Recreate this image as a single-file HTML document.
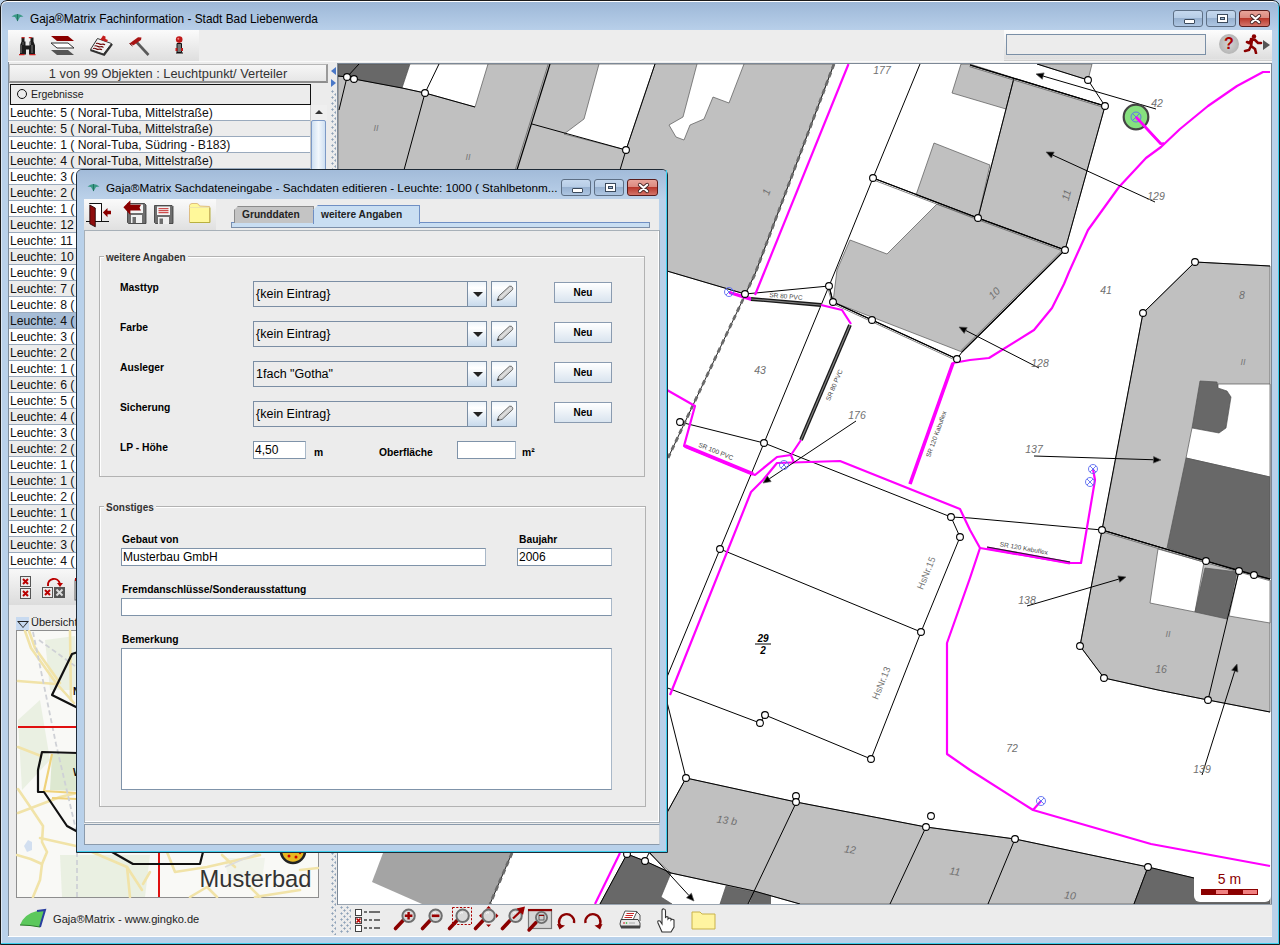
<!DOCTYPE html>
<html><head><meta charset="utf-8">
<style>
*{margin:0;padding:0;box-sizing:border-box}
html,body{width:1280px;height:945px;overflow:hidden;background:#b9d1ea;font-family:"Liberation Sans",sans-serif}
.abs{position:absolute}
#win{position:absolute;left:0;top:0;width:1280px;height:945px;border-radius:7px 7px 0 0;background:#b9d1ea;overflow:hidden}
#winb{position:absolute;left:0;top:0;width:1280px;height:945px;border:1px solid #1a1a1a;border-radius:7px 7px 0 0;pointer-events:none;box-shadow:inset -1px -1px 0 #3ccfee, inset 0 1px 0 #fff, inset 1px 0 0 rgba(255,255,255,0.5)}
#title{position:absolute;left:0;top:0;width:1280px;height:31px;background:linear-gradient(#9bb6d6,#b9d0ea)}
#title .t{position:absolute;left:30px;top:12px;font-size:11.85px;color:#000;white-space:nowrap}
.wbtn{position:absolute;top:10px;height:17px;border:1px solid #5d6f85;border-radius:3px;background:linear-gradient(#c5d8ee 0%,#b7cde6 45%,#97b1d0 50%,#aec6e2 100%)}
.wbtn.close{border-color:#5a1c1c;background:linear-gradient(#e8a49a 0%,#dc8a80 45%,#b9382c 50%,#d4756b 100%)}
#tb{position:absolute;left:8px;top:30px;width:1264px;height:32px;background:linear-gradient(#fafafa,#e3e3e3)}
.panel{background:#ececec}
.row{position:absolute;left:9px;width:301px;height:16px;font-size:12.2px;line-height:16px;padding-left:1px;color:#111;white-space:nowrap;overflow:hidden;border-bottom:1px solid #9aaabd}
.row.w{background:#fff}.row.g{background:#ececec}.row.s{background:#a7bdd6}
#dlg{position:absolute;left:76px;top:169px;width:592px;height:684px;border:1px solid #1e2a36;border-radius:6px 6px 0 0;background:#b9d1ea;overflow:hidden}
#dlgb{position:absolute;left:77px;top:170px;width:590px;height:682px;box-shadow:inset -1px -1px 0 #3ccfee;pointer-events:none}
.lbl{position:absolute;font-size:10.3px;font-weight:bold;color:#000;white-space:nowrap;margin-top:1px}
.combo{position:absolute;left:253px;width:234px;height:26px;border:1px solid #7b8ea4;background:#ececec;font-size:12.5px;line-height:24px;padding-left:2px;color:#000}
.combo .arr{position:absolute;right:0;top:0;width:19px;height:24px;border-left:1px solid #7b8ea4;background:linear-gradient(#eef4fa,#ffffff 25%,#c8daec)}
.combo .arr:after{content:"";position:absolute;left:5px;top:10px;border-left:5px solid transparent;border-right:5px solid transparent;border-top:5px solid #222}
.pen{position:absolute;left:491px;width:26px;height:26px;border:1px solid #7b8ea4;background:linear-gradient(#eef4fa,#ffffff 25%,#c8daec)}
.neu{position:absolute;left:554px;width:58px;height:21px;border:1px solid #8a9bb0;background:linear-gradient(#ffffff,#d9e4ef);font-size:10px;font-weight:bold;text-align:center;line-height:19px}
.inp{position:absolute;background:#fff;border:1px solid #7f93a9;border-right-color:#a9b8c8;font-size:12px;line-height:16px;padding-left:1px;color:#000}
.grp{position:absolute;border:1px solid #b2b2b2;box-shadow:inset 1px 1px 0 #fff}
.grp .gt{position:absolute;top:-5px;left:4px;background:#ececec;padding:0 2px;font-size:10px;font-weight:bold;color:#333}
</style></head><body>
<div id="win">
 <div id="title">
  <svg class="abs" style="left:11px;top:13px" width="13" height="9" viewBox="0 0 13 9"><path d="M0.5 3.5 Q6.5 -1.5 12.5 3.5 L9 4 L6.5 8.5 L4 4z" fill="#3a9a86"/><path d="M6.5 1 L6.5 8" stroke="#1f6a5a" stroke-width="0.8"/></svg>
  <div class="t">Gaja®Matrix Fachinformation - Stadt Bad Liebenwerda</div>
  <div class="wbtn" style="left:1173px;width:30px"><div class="abs" style="left:10px;top:8px;width:11px;height:5px;background:#fff;border:1px solid #3b4a5c;border-radius:1px"></div></div>
  <div class="wbtn" style="left:1206px;width:30px"><div class="abs" style="left:10px;top:3px;width:11px;height:9px;background:#fff;border:1px solid #3b4a5c"><div class="abs" style="left:2px;top:2px;width:5px;height:3px;border:1px solid #3b4a5c;background:#9fb7d3"></div></div></div>
  <div class="wbtn close" style="left:1239px;width:31px"><svg class="abs" style="left:9px;top:2px" width="13" height="12" viewBox="0 0 13 12"><path d="M2.8 2.8L10.2 9.2M10.2 2.8L2.8 9.2" stroke="#4a2a2a" stroke-width="3.9" stroke-linecap="round"/><path d="M2.8 2.8L10.2 9.2M10.2 2.8L2.8 9.2" stroke="#fff" stroke-width="2.1" stroke-linecap="round"/></svg></div>
 </div>
 <div id="tb"></div>
<div class="abs" style="left:8px;top:61px;width:1264px;height:2px;background:#ececec;border-top:1px solid #fafafa"></div>
<div class="abs" style="left:8px;top:30px;width:191px;height:31px;background:linear-gradient(#fbfbfb,#dedede)"></div>
<svg class="abs" style="left:18px;top:36px" width="19" height="20" viewBox="18 36 19 20">
<path d="M21.5 37.5h3v4h1v4h4v-4h1v-4h3v4l1.5 4v9h-6v-5h-3v5h-6v-9l1.5-4z" fill="#1c1c1c"/>
<path d="M21.7 37h2.8v1.3h-2.8zM28.8 37h3v1.3h-3z" fill="#c22"/>
<path d="M19 54h5.5v1.3h-5.5zM29.5 54h6v1.3h-6z" fill="#c22"/>
<path d="M21 45v8M32 45v8" stroke="#8a8a8a" stroke-width="0.9"/><path d="M23 42v3M30.5 42v3" stroke="#777" stroke-width="0.8"/></svg><svg class="abs" style="left:50px;top:35px" width="25" height="22" viewBox="0 0 25 22">
<path d="M1 1h17l6 5h-17z" fill="#8b0000"/>
<path d="M1 8h17l6 5h-17z" fill="#fff" stroke="#333" stroke-width="1"/>
<path d="M1 15h17l6 5h-17z" fill="#555"/></svg><svg class="abs" style="left:89px;top:34px" width="26" height="24" viewBox="89 34 26 24">
<path d="M97 39 L113 44.5 L104.5 56 L90 51z" fill="#333"/>
<path d="M97.5 38.5 L111.5 43.5 L103.5 54 L90.5 49.5z" fill="#f2f2f2" stroke="#222" stroke-width="0.9"/>
<path d="M96 43.5q2 -0.5 3 0.3t3 0.4 3 0.8M94.5 46q2 -0.5 3 0.3t3 0.4 3 0.8M93 48.5q2 -0.5 3 0.3t3 0.4 3 0.8" stroke="#6b0000" stroke-width="1.1" fill="none"/>
<path d="M101.5 38 L103 35.5 L105.5 36.5 L105.5 39 L108 40 L106.5 42 L100 39.5z" fill="#c41e1e"/></svg><svg class="abs" style="left:128px;top:35px" width="24" height="22" viewBox="128 35 24 22">
<path d="M136.5 42 L148.5 55" stroke="#5a5a5a" stroke-width="2.6"/>
<path d="M129.5 43.5 L138 37.3 L141.5 37.5 L141 40 L133.5 45.3z" fill="#a81414"/><path d="M129.5 43.5 L132.5 46" stroke="#6a0000" stroke-width="1"/></svg><svg class="abs" style="left:172px;top:35px" width="16" height="20" viewBox="172 35 16 20">
<circle cx="179.2" cy="39.6" r="3.3" fill="#c01818"/><circle cx="178.3" cy="38.7" r="1" fill="#f08080"/>
<path d="M177 43.5h4.5v9h-4.5z" fill="#777" stroke="#111" stroke-width="1"/>
<path d="M175.5 48h2v3h-2zM181 48h2v3h-2z" fill="#c01818"/><path d="M176 53h7" stroke="#111" stroke-width="1.2"/></svg>
<div class="abs" style="left:199px;top:30px;width:805px;height:31px;background:#ededed"></div>
<div class="abs" style="left:1004px;top:30px;width:268px;height:29px;background:linear-gradient(#fdfdfd,#dedede)"></div><div class="abs" style="left:1004px;top:59.5px;width:268px;height:1px;background:#cfcfcf"></div>
<div class="abs" style="left:1006px;top:34px;width:200px;height:21px;background:#ececec;border:1px solid #7a8fa6"></div>
<div class="abs" style="left:1219px;top:34px;width:20px;height:20px;border-radius:50%;background:radial-gradient(#d4d4d4,#a9a9a9)"></div>
<div class="abs" style="left:1219px;top:33px;width:20px;height:22px;text-align:center;font-size:16px;font-weight:bold;color:#a00;line-height:22px">?</div>
<svg class="abs" style="left:1243px;top:34px" width="28" height="20" viewBox="0 0 28 20">
<circle cx="11" cy="2.5" r="2.2" fill="#8b0000"/>
<path d="M8 5l4 1 3 3 3 0M9 5l-3 4-2-1M9 6l-1 6 4 3 1 4M8 12l-2 4-4 1" stroke="#8b0000" stroke-width="2.6" fill="none" stroke-linecap="round"/>
<path d="M20 6l7 5-7 5z" fill="#555"/></svg>

 <!-- LEFT PANEL -->
 <div id="left" class="abs panel" style="left:8px;top:62px;width:322px;height:875px;border-left:1px solid #7f8c9a;border-bottom:1px solid #fff"></div>
<div class="abs" style="left:9px;top:64px;width:319px;height:19px;background:linear-gradient(#f6f6f6,#e6e6e6);border:1px solid #b5b5b5;border-bottom:2px solid #8e8e8e;border-right:2px solid #9a9a9a;font-size:12.8px;text-align:center;line-height:17px;color:#333">1 von 99 Objekten : Leuchtpunkt/ Verteiler</div>
<div class="abs" style="left:10px;top:84px;width:301px;height:21px;border:1.5px solid #111;background:#ececec;font-size:10.5px;line-height:18px;color:#222;padding-left:20px">Ergebnisse</div>
<div class="abs" style="left:16.8px;top:88.8px;width:10.5px;height:10.5px;border:1px solid #111;border-radius:50%"></div>
<div class="abs" style="left:9px;top:105px;width:301px;height:464px;background:#fff;border-left:1px solid #555"></div>
<div class="row w" style="top:105px">Leuchte: 5 ( Noral-Tuba, Mittelstraße)</div><div class="row g" style="top:121px">Leuchte: 5 ( Noral-Tuba, Mittelstraße)</div><div class="row w" style="top:137px">Leuchte: 1 ( Noral-Tuba, Südring - B183)</div><div class="row g" style="top:153px">Leuchte: 4 ( Noral-Tuba, Mittelstraße)</div><div class="row w" style="top:169px">Leuchte: 3 ( Noral-Tuba, Mittelstraße)</div><div class="row g" style="top:185px">Leuchte: 2 ( Noral-Tuba, Mittelstraße)</div><div class="row w" style="top:201px">Leuchte: 1 ( Noral-Tuba, Mittelstraße)</div><div class="row g" style="top:217px">Leuchte: 12 ( Noral-Tuba)</div><div class="row w" style="top:233px">Leuchte: 11 ( Noral-Tuba)</div><div class="row g" style="top:249px">Leuchte: 10 ( Noral-Tuba)</div><div class="row w" style="top:265px">Leuchte: 9 ( Noral-Tuba)</div><div class="row g" style="top:281px">Leuchte: 7 ( Noral-Tuba)</div><div class="row w" style="top:297px">Leuchte: 8 ( Noral-Tuba)</div><div class="row s" style="top:313px">Leuchte: 4 ( Noral-Tuba)</div><div class="row w" style="top:329px">Leuchte: 3 ( Noral-Tuba)</div><div class="row g" style="top:345px">Leuchte: 2 ( Noral-Tuba)</div><div class="row w" style="top:361px">Leuchte: 1 ( Noral-Tuba)</div><div class="row g" style="top:377px">Leuchte: 6 ( Noral-Tuba)</div><div class="row w" style="top:393px">Leuchte: 5 ( Noral-Tuba)</div><div class="row g" style="top:409px">Leuchte: 4 ( Noral-Tuba)</div><div class="row w" style="top:425px">Leuchte: 3 ( Noral-Tuba)</div><div class="row g" style="top:441px">Leuchte: 2 ( Noral-Tuba)</div><div class="row w" style="top:457px">Leuchte: 1 ( Noral-Tuba)</div><div class="row g" style="top:473px">Leuchte: 1 ( Noral-Tuba)</div><div class="row w" style="top:489px">Leuchte: 2 ( Noral-Tuba)</div><div class="row g" style="top:505px">Leuchte: 1 ( Noral-Tuba)</div><div class="row w" style="top:521px">Leuchte: 2 ( Noral-Tuba)</div><div class="row g" style="top:537px">Leuchte: 3 ( Noral-Tuba)</div><div class="row w" style="top:553px">Leuchte: 4 ( Noral-Tuba)</div>
<div class="abs" style="left:310px;top:105px;width:17px;height:464px;background:#ececec;border-left:1px solid #c8c8c8"></div>
<div class="abs" style="left:311px;top:105px;width:16px;height:15px;background:#efefef"><div class="abs" style="left:4px;top:5px;border-left:4px solid transparent;border-right:4px solid transparent;border-bottom:4px solid #333"></div></div>
<div class="abs" style="left:311px;top:120px;width:15px;height:120px;border:1px solid #7d9ac6;border-radius:2px;background:linear-gradient(90deg,#cfe0f2,#f2f7fc 50%,#cfe0f2)"></div>
<div class="abs" style="left:9px;top:569px;width:319px;height:36px;background:linear-gradient(#f8f8f8,#dcdcdc)"></div>
<svg class="abs" style="left:18px;top:575px" width="70" height="26" viewBox="0 0 70 26">
<rect x="2.5" y="1.5" width="10" height="10" fill="#ececec" stroke="#555"/><path d="M5 4l5 5M10 4l-5 5" stroke="#b00" stroke-width="2"/>
<rect x="2.5" y="13.5" width="10" height="10" fill="#ececec" stroke="#555"/><path d="M5 16l5 5M10 16l-5 5" stroke="#b00" stroke-width="2"/>
<rect x="24.5" y="12.5" width="10" height="10" fill="#ececec" stroke="#555"/><path d="M27 15l5 5M32 15l-5 5" stroke="#b00" stroke-width="2"/>
<rect x="36" y="12" width="11" height="11" fill="#555"/><path d="M38.5 14.5l6 6M44.5 14.5l-6 6" stroke="#ddd" stroke-width="2"/>
<path d="M30 11 C29 3 40 1 42 9" stroke="#b00" stroke-width="2" fill="none"/><path d="M39 8l3 4 3-4z" fill="#b00"/>
<rect x="57" y="5" width="4" height="20" fill="#ddd" stroke="#666"/><rect x="57" y="3" width="4" height="3" fill="#b00"/></svg>
<div class="abs" style="left:16px;top:617px;width:13px;height:13px;background:#c8daf0"></div>
<div class="abs" style="left:17px;top:621px;border-left:6px solid transparent;border-right:6px solid transparent;border-top:7px solid #222"></div>
<div class="abs" style="left:19px;top:622px;border-left:4px solid transparent;border-right:4px solid transparent;border-top:5px solid #c8daf0"></div>
<div class="abs" style="left:31px;top:616px;font-size:11px;color:#222;white-space:nowrap">Übersichtskarte</div>
<svg class="abs" style="left:16px;top:630px" width="303" height="268" viewBox="16 630 303 268">
<rect x="16" y="630" width="303" height="268" fill="#8e8e8e"/>
<rect x="17" y="631" width="301" height="266" fill="#f9f9f6"/>
<g fill="#eaf0e2">
<path d="M45 640 L75 636 L78 690 L50 690z"/><path d="M18 720 L40 700 L50 760 L22 790z"/><path d="M52 754 L77 754 L77 791 L50 790z" fill="#dde8d0"/>
<path d="M60 855 L150 855 L145 897 L62 897z"/><path d="M225 858 L265 858 L262 880 L228 880z" fill="#f0f3ea"/>
</g>
<path d="M24 846 l4 -6 4 2 0 8 -5 2z" fill="#d2dff0"/>
<g fill="none" stroke="#f1e3a8" stroke-width="2.6" stroke-linecap="round" stroke-linejoin="round">
<path d="M25 631 L31 648 L56 683 L74 703"/><path d="M29 631 L35 648 L60 683"/>
<path d="M18 681 L56 684"/>
<path d="M70 631 L71 700"/>
<path d="M18 747 L41 756"/>
<path d="M18 813 L60 797 L77 793"/>
<path d="M18 789 L31 808 L43 826 L42 842 L47 852 L42 864 L40 880 L33 897"/>
<path d="M40 838 L76 846"/>
<path d="M17 855 Q30 858 42 864"/>
<path d="M92 852 L127 867 L142 890"/><path d="M127 867 L130 897"/>
<path d="M150 872 L143 884"/>
<path d="M167 852 L175 872 L207 867 L260 855"/>
<path d="M190 897 L207 887 L217 897"/>
<path d="M222 855 L235 867"/>
<path d="M250 887 L260 897"/>
<path d="M255 897 L300 890"/><path d="M300 870 L318 868"/>
</g>
<g fill="none" stroke="#efd27a" stroke-width="2.2">
<path d="M52 754 L44 791 L77 793"/><path d="M52 798 L77 799"/>
</g>
<g fill="none" stroke="#cfd1d6" stroke-width="1.8" stroke-dasharray="5 3">
<path d="M33 632 L56 744 L76 830"/><path d="M39 640 L75 666"/><path d="M77 852 L77 897"/>
</g>
<path d="M225 867 L260 852" stroke="#dcdcdc" stroke-width="1.5"/>
<path d="M18 727 L78 727" stroke="#e01010" stroke-width="2.2"/>
<path d="M159 852 L159 897" stroke="#e01010" stroke-width="2"/>
<g fill="none" stroke="#111" stroke-width="2.2" stroke-linejoin="round">
<path d="M78 652 L72 654 L52 695 L78 708"/>
<path d="M78 753 L42 752 L38 770 L38 792 L44 792 L67 826 L78 832"/>
<path d="M112 852 L133 864 L200 864 L203 852"/>
</g>
<text x="73" y="691" font-size="10" font-weight="bold" fill="#111" dominant-baseline="central">N</text>
<text x="73" y="772" font-size="10" font-weight="bold" fill="#111" dominant-baseline="central">W</text>
<circle cx="293" cy="851" r="12" fill="#e8b820" stroke="#222" stroke-width="2.5"/>
<circle cx="289" cy="856" r="1.5" fill="#c00"/><circle cx="296" cy="857" r="1.5" fill="#c00"/><circle cx="300" cy="853" r="1.2" fill="#c00"/>
<text x="255.5" y="878.5" font-size="23.7" fill="#333" text-anchor="middle" dominant-baseline="central">Musterbad</text>
</svg>
<svg class="abs" style="left:18px;top:908px" width="30" height="22" viewBox="0 0 30 22">
<path d="M2 17 Q6 6 19 3 L27 2 Q24 12 22 19 Q12 17 2 17z" fill="#5cc85c"/><path d="M19 3 L27 2 Q24 12 22 19" stroke="#2a3fa0" stroke-width="2" fill="none"/><path d="M2 17 Q12 17 22 19" stroke="#2a7a2a" stroke-width="1" fill="none"/></svg>
<div class="abs" style="left:53px;top:913px;font-size:11.1px;color:#222;white-space:nowrap">Gaja®Matrix - www.gingko.de</div>

 <div class="abs panel" style="left:330px;top:62px;width:8px;height:874px"></div>
 <div class="abs" style="left:330.5px;top:90px;width:6px;height:845px;clip-path:inset(0 0.5px 0 0);background-image:radial-gradient(circle at 1.5px 1.5px,#8ea2b8 0.9px,transparent 1.2px),radial-gradient(circle at 4.5px 4.5px,#8ea2b8 0.9px,transparent 1.2px);background-size:6px 6px"></div>
<div class="abs" style="left:8px;top:936px;width:1264px;height:1px;background:#fff"></div>
<div class="abs" style="left:331px;top:67px;border-top:4px solid transparent;border-bottom:4px solid transparent;border-right:5px solid #4a78c8"></div>
<div class="abs" style="left:331px;top:79px;border-top:4px solid transparent;border-bottom:4px solid transparent;border-left:5px solid #4a78c8"></div>

 <!-- MAP -->
 <div id="mapwrap" class="abs" style="left:337px;top:63px;width:935px;height:842px;background:#fff;border:1px solid #7c8896"></div>
<svg class="abs" style="left:338px;top:64px" width="933" height="840" viewBox="338 64 933 840" shape-rendering="geometricPrecision">
<rect x="338" y="64" width="933" height="840" fill="#fff"/>
<polygon points="338,64 834,64 755,274 745,294 667,271 338,175" fill="#c0c0c0" stroke="#555" stroke-width="0.7"/>
<polygon points="338,64 410,64 402,88 354,79 347,77 338,76" fill="#686868" stroke="#555" stroke-width="0.7"/>
<polygon points="410,64 488,64 475,107 425,93 402,88" fill="#fff" stroke="#555" stroke-width="0.7"/>
<polygon points="599,64 655,64 626,150 564,134 584,119" fill="#fff" stroke="#555" stroke-width="0.7"/>
<polygon points="697,64 744,64 729,103 713,97 704,119 690,125 684,140 676,137 669,125 683,117" fill="#fff" stroke="#555" stroke-width="0.7"/>
<polygon points="961,64 970,64 1014,78 1006,109 952,93" fill="#c0c0c0" stroke="#555" stroke-width="0.7"/>
<polygon points="1037,64 1092,64 1088,80" fill="#c0c0c0" stroke="#555" stroke-width="0.7"/>
<polygon points="1014,78 1105,106 1065,250 978,218" fill="#c0c0c0" stroke="#555" stroke-width="0.7"/>
<polygon points="934,143 990,165 978,218 916,195" fill="#c0c0c0" stroke="#555" stroke-width="0.7"/>
<polygon points="850,240 887,254 937,204 1065,250 962,352 833,302 837,270" fill="#c0c0c0" stroke="#555" stroke-width="0.7"/>
<polygon points="1195,262 1270,266 1270,579 1254,575 1239,571 1206,561 1102,530 1111,484 1143,313" fill="#c0c0c0" stroke="#555" stroke-width="0.7"/>
<polygon points="1200,381 1217,382 1218,388 1227,391 1231,397 1226,428 1219,433 1192,428" fill="#686868" stroke="#555" stroke-width="0.7"/>
<polygon points="1218,384 1270,384 1270,477 1186,458 1192,428 1219,433 1226,428 1231,397 1227,391 1218,388" fill="#fff" stroke="#555" stroke-width="0.7"/>
<polygon points="1186,458 1270,477 1270,579 1254,575 1239,571 1206,561 1167,548" fill="#686868" stroke="#555" stroke-width="0.7"/>
<polygon points="1102,530 1206,561 1239,571 1270,580 1270,712 1208,700 1158,690 1104,678 1080,646" fill="#c0c0c0" stroke="#555" stroke-width="0.7"/>
<polygon points="1158,549 1204,562 1195,612 1150,603" fill="#fff" stroke="#555" stroke-width="0.7"/>
<polygon points="1205,568 1237,572 1227,619 1195,612" fill="#686868" stroke="#555" stroke-width="0.7"/>
<polygon points="1239,571 1270,580 1270,623 1229,616" fill="#fff" stroke="#555" stroke-width="0.7"/>
<polygon points="686,778 796,802 926,827 1015,839 1148,867 1134,904 800,904 754,891 671,873 649,853 665,816" fill="#c0c0c0" stroke="#555" stroke-width="0.7"/>
<polygon points="754,891 771,895.5 771,904 749,904" fill="#686868" stroke="none" stroke-width="0.7"/>
<polygon points="1148,867 1194,878 1270,896 1270,904 1134,904" fill="#686868" stroke="#555" stroke-width="0.7"/>
<polygon points="627,854 645,861 671,873 661,897 672,904 600,904" fill="#686868" stroke="#555" stroke-width="0.7"/>
<polygon points="726,886 754,892 748,904 720,904" fill="#686868" stroke="#555" stroke-width="0.7"/>
<polygon points="383,853 512,853 490,904 422,904 372,882" fill="#a4a4a4" stroke="none" stroke-width="0.7"/>
<polyline points="920,64 873,178 834,274 829,286 764,443 747,484 720,549 667,677" fill="none" stroke="#000" stroke-width="1.0" />
<polyline points="873,178 978,218 1065,250" fill="none" stroke="#000" stroke-width="1.0" />
<polyline points="970,65 1105,106" fill="none" stroke="#000" stroke-width="1.0" />
<polyline points="1037,64 1088,80 1105,106" fill="none" stroke="#000" stroke-width="1.0" />
<polyline points="1105,106 1065,250 962,352" fill="none" stroke="#000" stroke-width="1.0" />
<polyline points="1014,78 978,218" fill="none" stroke="#000" stroke-width="1.0" />
<polyline points="667,271 745,294 829,286" fill="none" stroke="#000" stroke-width="1.0" />
<polyline points="829,286 833,302 872,320 957,359 962,352" fill="none" stroke="#000" stroke-width="1.0" />
<polyline points="680,422 764,443 951,517 970,518 1102,530" fill="none" stroke="#000" stroke-width="1.0" />
<polyline points="951,517 960,537 921,632 871,759" fill="none" stroke="#000" stroke-width="1.0" />
<polyline points="720,549 921,632" fill="none" stroke="#000" stroke-width="1.0" />
<polyline points="665,687 760,723 765,715 871,759" fill="none" stroke="#000" stroke-width="1.0" />
<polyline points="667,702 686,778 645,853" fill="none" stroke="#000" stroke-width="1.0" />
<polyline points="686,778 796,802 926,827 1015,839 1148,867 1194,878" fill="none" stroke="#000" stroke-width="1.0" />
<polyline points="796,803 748,904" fill="none" stroke="#000" stroke-width="1.0" />
<polyline points="926,827 890,904" fill="none" stroke="#000" stroke-width="1.0" />
<polyline points="1015,839 988,904" fill="none" stroke="#000" stroke-width="1.0" />
<polyline points="1148,867 1134,904" fill="none" stroke="#000" stroke-width="1.0" />
<polyline points="1102,530 1080,646 1104,678 1158,690 1208,700 1270,712" fill="none" stroke="#000" stroke-width="1.0" />
<polyline points="1239,571 1208,700" fill="none" stroke="#000" stroke-width="1.0" />
<polyline points="1143,313 1195,262 1270,266" fill="none" stroke="#000" stroke-width="1.0" />
<polyline points="1143,313 1102,530" fill="none" stroke="#000" stroke-width="1.0" />
<polyline points="1102,530 1206,561 1239,571 1254,575 1270,579" fill="none" stroke="#000" stroke-width="1.0" />
<polyline points="671,873 754,891 800,904" fill="none" stroke="#000" stroke-width="1.0" />
<polyline points="649,853 645,861" fill="none" stroke="#000" stroke-width="1.0" />
<polyline points="627,854 600,904" fill="none" stroke="#000" stroke-width="1.0" />
<polyline points="627,854 645,861 671,873" fill="none" stroke="#000" stroke-width="1.0" />
<polyline points="338,76 347,77 354,79 402,88 425,93 475,107" fill="none" stroke="#000" stroke-width="1.0" />
<polyline points="439,64 425,93 404,170" fill="none" stroke="#000" stroke-width="1.0" />
<polyline points="359,64 347,77 339,110" fill="none" stroke="#000" stroke-width="1.0" />
<polyline points="532,124 626,150 655,64" fill="none" stroke="#000" stroke-width="1.0" />
<polyline points="626,150 620,170" fill="none" stroke="#000" stroke-width="1.0" />
<polyline points="873,178 978,218 1065,250" fill="none" stroke="#000" stroke-width="1.2" />
<polyline points="872.39,179.59 977.41,219.6 1064.41,251.6" fill="none" stroke="#666" stroke-width="0.8" />
<polyline points="970,65 1105,106" fill="none" stroke="#000" stroke-width="1.2" />
<polyline points="969.51,66.63 1104.51,107.63" fill="none" stroke="#666" stroke-width="0.8" />
<polyline points="1065,250 962,352" fill="none" stroke="#000" stroke-width="1.2" />
<polyline points="1063.8,248.79 960.8,350.79" fill="none" stroke="#666" stroke-width="0.8" />
<polyline points="1102,530 1206,561 1270,579" fill="none" stroke="#000" stroke-width="1.2" />
<polyline points="1101.51,531.63 1205.54,562.64 1269.54,580.64" fill="none" stroke="#666" stroke-width="0.8" />
<polyline points="829,286 833,302 957,359" fill="none" stroke="#000" stroke-width="1.2" />
<polyline points="827.35,286.41 832.29,303.54 956.29,360.54" fill="none" stroke="#666" stroke-width="0.8" />
<polyline points="550,64 517,170" fill="none" stroke="#000" stroke-width="1.2" />
<polyline points="548.38,63.49 515.38,169.49" fill="none" stroke="#666" stroke-width="0.8" />
<polyline points="834,64 755,274 668,458" fill="none" stroke="#222" stroke-width="1" />
<polyline points="834,64 755,274 668,458" fill="none" stroke="#6a6a6a" stroke-width="2.8" stroke-dasharray="5 4"/>
<polyline points="512,853 490,904" fill="none" stroke="#222" stroke-width="1" />
<polyline points="512,853 490,904" fill="none" stroke="#6a6a6a" stroke-width="2.8" stroke-dasharray="5 4"/>
<polyline points="848.5,64 755,295" fill="none" stroke="#ff00ff" stroke-width="2.2" stroke-linejoin="round"/>
<polyline points="729,292 751,299" fill="none" stroke="#ff00ff" stroke-width="2.2" stroke-linejoin="round"/>
<polyline points="821,305 842,310 851,324" fill="none" stroke="#ff00ff" stroke-width="2.2" stroke-linejoin="round"/>
<polyline points="801,440 791,455 794,463" fill="none" stroke="#ff00ff" stroke-width="2.2" stroke-linejoin="round"/>
<polyline points="667,390 695,406 684,446 755,475 777,457 791,455" fill="none" stroke="#ff00ff" stroke-width="2.2" stroke-linejoin="round"/>
<polyline points="620,853 595,904" fill="none" stroke="#ff00ff" stroke-width="2.2" stroke-linejoin="round"/>
<polyline points="670,695 751,492 763,480 777,463 840,461 960,509 970,530 980,548 970,578 947,643 947,754 970,770 1033,810 1151,844 1270,866" fill="none" stroke="#ff00ff" stroke-width="2.2" stroke-linejoin="round"/>
<polyline points="910,484 953,363 970,360 989,358 1034,330 1052,308 1064,284 1069,272 1088,230 1119,187 1146,158 1161,147 1180,129 1208,106 1237,86 1263,72 1270,72" fill="none" stroke="#ff00ff" stroke-width="2.2" stroke-linejoin="round"/>
<polyline points="980,548 1070,563 1081,563 1095,480 1093,469" fill="none" stroke="#ff00ff" stroke-width="2.2" stroke-linejoin="round"/>
<polyline points="1136,117 1161,144 1164,143" fill="none" stroke="#ff00ff" stroke-width="2.2" stroke-linejoin="round"/>
<polyline points="1033,810 1041,801" fill="none" stroke="#ff00ff" stroke-width="2.2" stroke-linejoin="round"/>
<polyline points="910,484 953,363" fill="none" stroke="#ff00ff" stroke-width="3.6" />
<polyline points="685,446 753,474" fill="none" stroke="#ff00ff" stroke-width="3.6" />
<polyline points="987,548 1070,563" fill="none" stroke="#ff00ff" stroke-width="3.2" />
<polyline points="987,547 1070,562" fill="none" stroke="#222" stroke-width="1.2" />
<polyline points="751,299 821,305" fill="none" stroke="#1a1a1a" stroke-width="3.8" />
<polyline points="751,299 821,305" fill="none" stroke="#808080" stroke-width="1.2" />
<polyline points="850,325 801,440" fill="none" stroke="#1a1a1a" stroke-width="3.8" />
<polyline points="850,325 801,440" fill="none" stroke="#808080" stroke-width="1.2" />
<polygon points="729,291 751,297 751,301 729,294" fill="#ff00ff" stroke="none" stroke-width="0.7"/>
<polyline points="1156,109 1043.2,76.1" fill="none" stroke="#000" stroke-width="1" /><polygon points="1036,74 1044.1,72.9 1042.3,79.3" fill="#000" stroke="#555" stroke-width="0.7"/>
<polyline points="1155,202 1052.8169988100763,155.12706367434689" fill="none" stroke="#000" stroke-width="1" /><polygon points="1046,152 1054.2,152.1 1051.4,158.1" fill="#000" stroke="#555" stroke-width="0.7"/>
<polyline points="1039,368 965.6744993791766,330.420680931828" fill="none" stroke="#000" stroke-width="1" /><polygon points="959,327 967.2,327.5 964.2,333.4" fill="#000" stroke="#555" stroke-width="0.7"/>
<polyline points="856,421 769.2403772075338,478.8397485283108" fill="none" stroke="#000" stroke-width="1" /><polygon points="763,483 767.4,476.1 771.1,481.6" fill="#000" stroke="#555" stroke-width="0.7"/>
<polyline points="1034,456 1153.503717242035,459.7638966060483" fill="none" stroke="#000" stroke-width="1" /><polygon points="1161,460 1153.4,463.1 1153.6,456.5" fill="#000" stroke="#555" stroke-width="0.7"/>
<polyline points="1027,606 1118.8024476769033,579.1083739128263" fill="none" stroke="#000" stroke-width="1" /><polygon points="1126,577 1119.7,582.3 1117.9,575.9" fill="#000" stroke="#555" stroke-width="0.7"/>
<polyline points="1202,775 1234.7445989820742,671.1528432282792" fill="none" stroke="#000" stroke-width="1" /><polygon points="1237,664 1237.9,672.1 1231.6,670.2" fill="#000" stroke="#555" stroke-width="0.7"/>
<polyline points="650,853 688.93206528612,895.4713439484945" fill="none" stroke="#000" stroke-width="1" /><polygon points="694,901 686.5,897.7 691.4,893.2" fill="#000" stroke="#555" stroke-width="0.7"/>
<circle cx="347" cy="77" r="3.4" fill="#fff" stroke="#000" stroke-width="1.1"/>
<circle cx="354" cy="79" r="3.4" fill="#fff" stroke="#000" stroke-width="1.1"/>
<circle cx="425" cy="93" r="3.4" fill="#fff" stroke="#000" stroke-width="1.1"/>
<circle cx="626" cy="150" r="3.4" fill="#fff" stroke="#000" stroke-width="1.1"/>
<circle cx="873" cy="178" r="3.4" fill="#fff" stroke="#000" stroke-width="1.1"/>
<circle cx="978" cy="218" r="3.4" fill="#fff" stroke="#000" stroke-width="1.1"/>
<circle cx="1065" cy="250" r="3.4" fill="#fff" stroke="#000" stroke-width="1.1"/>
<circle cx="1088" cy="80" r="3.4" fill="#fff" stroke="#000" stroke-width="1.1"/>
<circle cx="1105" cy="106" r="3.4" fill="#fff" stroke="#000" stroke-width="1.1"/>
<circle cx="829" cy="286" r="3.4" fill="#fff" stroke="#000" stroke-width="1.1"/>
<circle cx="833" cy="302" r="3.4" fill="#fff" stroke="#000" stroke-width="1.1"/>
<circle cx="872" cy="320" r="3.4" fill="#fff" stroke="#000" stroke-width="1.1"/>
<circle cx="957" cy="359" r="3.4" fill="#fff" stroke="#000" stroke-width="1.1"/>
<circle cx="745" cy="294" r="3.4" fill="#fff" stroke="#000" stroke-width="1.1"/>
<circle cx="680" cy="422" r="3.4" fill="#fff" stroke="#000" stroke-width="1.1"/>
<circle cx="764" cy="443" r="3.4" fill="#fff" stroke="#000" stroke-width="1.1"/>
<circle cx="720" cy="549" r="3.4" fill="#fff" stroke="#000" stroke-width="1.1"/>
<circle cx="951" cy="517" r="3.4" fill="#fff" stroke="#000" stroke-width="1.1"/>
<circle cx="960" cy="537" r="3.4" fill="#fff" stroke="#000" stroke-width="1.1"/>
<circle cx="921" cy="632" r="3.4" fill="#fff" stroke="#000" stroke-width="1.1"/>
<circle cx="1102" cy="530" r="3.4" fill="#fff" stroke="#000" stroke-width="1.1"/>
<circle cx="1206" cy="561" r="3.4" fill="#fff" stroke="#000" stroke-width="1.1"/>
<circle cx="1239" cy="571" r="3.4" fill="#fff" stroke="#000" stroke-width="1.1"/>
<circle cx="1254" cy="575" r="3.4" fill="#fff" stroke="#000" stroke-width="1.1"/>
<circle cx="1080" cy="646" r="3.4" fill="#fff" stroke="#000" stroke-width="1.1"/>
<circle cx="1104" cy="678" r="3.4" fill="#fff" stroke="#000" stroke-width="1.1"/>
<circle cx="1143" cy="313" r="3.4" fill="#fff" stroke="#000" stroke-width="1.1"/>
<circle cx="1195" cy="262" r="3.4" fill="#fff" stroke="#000" stroke-width="1.1"/>
<circle cx="760" cy="723" r="3.4" fill="#fff" stroke="#000" stroke-width="1.1"/>
<circle cx="765" cy="715" r="3.4" fill="#fff" stroke="#000" stroke-width="1.1"/>
<circle cx="871" cy="759" r="3.4" fill="#fff" stroke="#000" stroke-width="1.1"/>
<circle cx="686" cy="778" r="3.4" fill="#fff" stroke="#000" stroke-width="1.1"/>
<circle cx="796" cy="796" r="3.4" fill="#fff" stroke="#000" stroke-width="1.1"/>
<circle cx="796" cy="802" r="3.4" fill="#fff" stroke="#000" stroke-width="1.1"/>
<circle cx="926" cy="827" r="3.4" fill="#fff" stroke="#000" stroke-width="1.1"/>
<circle cx="931" cy="816" r="3.4" fill="#fff" stroke="#000" stroke-width="1.1"/>
<circle cx="1015" cy="839" r="3.4" fill="#fff" stroke="#000" stroke-width="1.1"/>
<circle cx="1148" cy="867" r="3.4" fill="#fff" stroke="#000" stroke-width="1.1"/>
<circle cx="1208" cy="700" r="3.4" fill="#fff" stroke="#000" stroke-width="1.1"/>
<circle cx="627" cy="854" r="3.4" fill="#fff" stroke="#000" stroke-width="1.1"/>
<circle cx="645" cy="861" r="3.4" fill="#fff" stroke="#000" stroke-width="1.1"/>
<g stroke="#5b6cf0" stroke-width="0.9" fill="none"><circle cx="729" cy="292" r="4.5"/><path d="M726 289L732 295M732 289L726 295"/></g>
<g stroke="#5b6cf0" stroke-width="0.9" fill="none"><circle cx="784" cy="465" r="4.5"/><path d="M781 462L787 468M787 462L781 468"/></g>
<g stroke="#5b6cf0" stroke-width="0.9" fill="none"><circle cx="1093" cy="469" r="4.5"/><path d="M1090 466L1096 472M1096 466L1090 472"/></g>
<g stroke="#5b6cf0" stroke-width="0.9" fill="none"><circle cx="1090" cy="482" r="4.5"/><path d="M1087 479L1093 485M1093 479L1087 485"/></g>
<g stroke="#5b6cf0" stroke-width="0.9" fill="none"><circle cx="1041" cy="801" r="4.5"/><path d="M1038 798L1044 804M1044 798L1038 804"/></g>
<circle cx="1136" cy="117" r="12.3" fill="#86e07e" stroke="#444" stroke-width="2.2"/>
<g stroke="#5b6cf0" stroke-width="0.9" fill="none"><circle cx="1136" cy="117" r="5"/><path d="M1132.5 113.5L1139.5 120.5M1139.5 113.5L1132.5 120.5"/></g>
<polyline points="1136,117 1161,144" fill="none" stroke="#ff00ff" stroke-width="2.6" />
<text x="882" y="70" font-size="10.5" fill="#707070" text-anchor="middle" dominant-baseline="central" font-style="italic" font-weight="normal">177</text>
<text x="1157" y="103" font-size="10.5" fill="#707070" text-anchor="middle" dominant-baseline="central" font-style="italic" font-weight="normal">42</text>
<text x="1156" y="196" font-size="10.5" fill="#707070" text-anchor="middle" dominant-baseline="central" font-style="italic" font-weight="normal">129</text>
<text x="1066" y="195" font-size="10.5" fill="#707070" text-anchor="middle" dominant-baseline="central" font-style="italic" font-weight="normal" transform="rotate(-75 1066 195)">11</text>
<text x="766" y="192" font-size="10.5" fill="#707070" text-anchor="middle" dominant-baseline="central" font-style="italic" font-weight="normal" transform="rotate(-70 766 192)">1</text>
<text x="994" y="293" font-size="10.5" fill="#707070" text-anchor="middle" dominant-baseline="central" font-style="italic" font-weight="normal" transform="rotate(-45 994 293)">10</text>
<text x="1106" y="290" font-size="10.5" fill="#707070" text-anchor="middle" dominant-baseline="central" font-style="italic" font-weight="normal">41</text>
<text x="1242" y="295" font-size="10.5" fill="#707070" text-anchor="middle" dominant-baseline="central" font-style="italic" font-weight="normal">8</text>
<text x="1040" y="363" font-size="10.5" fill="#707070" text-anchor="middle" dominant-baseline="central" font-style="italic" font-weight="normal">128</text>
<text x="1034" y="449" font-size="10.5" fill="#707070" text-anchor="middle" dominant-baseline="central" font-style="italic" font-weight="normal">137</text>
<text x="760" y="370" font-size="10.5" fill="#707070" text-anchor="middle" dominant-baseline="central" font-style="italic" font-weight="normal">43</text>
<text x="857" y="415" font-size="10.5" fill="#707070" text-anchor="middle" dominant-baseline="central" font-style="italic" font-weight="normal">176</text>
<text x="1027" y="600" font-size="10.5" fill="#707070" text-anchor="middle" dominant-baseline="central" font-style="italic" font-weight="normal">138</text>
<text x="1161" y="669" font-size="10.5" fill="#707070" text-anchor="middle" dominant-baseline="central" font-style="italic" font-weight="normal">16</text>
<text x="727" y="820" font-size="10.5" fill="#707070" text-anchor="middle" dominant-baseline="central" font-style="italic" font-weight="normal" transform="rotate(8 727 820)">13 b</text>
<text x="850" y="849" font-size="10.5" fill="#707070" text-anchor="middle" dominant-baseline="central" font-style="italic" font-weight="normal" transform="rotate(8 850 849)">12</text>
<text x="955" y="871" font-size="10.5" fill="#707070" text-anchor="middle" dominant-baseline="central" font-style="italic" font-weight="normal" transform="rotate(8 955 871)">11</text>
<text x="1012" y="748" font-size="10.5" fill="#707070" text-anchor="middle" dominant-baseline="central" font-style="italic" font-weight="normal">72</text>
<text x="1202" y="769" font-size="10.5" fill="#707070" text-anchor="middle" dominant-baseline="central" font-style="italic" font-weight="normal">139</text>
<text x="1070" y="895" font-size="10.5" fill="#707070" text-anchor="middle" dominant-baseline="central" font-style="italic" font-weight="normal" transform="rotate(8 1070 895)">10</text>
<text x="1243" y="362" font-size="9" fill="#777" text-anchor="middle" dominant-baseline="central" font-style="italic" font-weight="normal">II</text>
<text x="1168" y="634" font-size="9" fill="#777" text-anchor="middle" dominant-baseline="central" font-style="italic" font-weight="normal">II</text>
<text x="376" y="128" font-size="9" fill="#777" text-anchor="middle" dominant-baseline="central" font-style="italic" font-weight="normal">II</text>
<text x="468" y="157" font-size="9" fill="#777" text-anchor="middle" dominant-baseline="central" font-style="italic" font-weight="normal">II</text>
<text x="926" y="573" font-size="9.5" fill="#777" text-anchor="middle" dominant-baseline="central" font-style="normal" font-weight="normal" transform="rotate(-68 926 573)">HsNr.15</text>
<text x="881" y="683" font-size="9.5" fill="#777" text-anchor="middle" dominant-baseline="central" font-style="normal" font-weight="normal" transform="rotate(-68 881 683)">HsNr.13</text>
<text x="763" y="638" font-size="10" fill="#000" text-anchor="middle" dominant-baseline="central" font-style="italic" font-weight="bold">29</text>
<line x1="755" y1="644" x2="771" y2="644" stroke="#000" stroke-width="1"/>
<text x="763" y="650" font-size="10" fill="#000" text-anchor="middle" dominant-baseline="central" font-style="italic" font-weight="bold">2</text>
<text x="786" y="296" font-size="6.5" fill="#444" text-anchor="middle" dominant-baseline="central" font-style="normal" font-weight="normal" transform="rotate(5 786 296)">SR 80 PVC</text>
<text x="834" y="385" font-size="6.5" fill="#444" text-anchor="middle" dominant-baseline="central" font-style="normal" font-weight="normal" transform="rotate(-67 834 385)">SR 80 PVC</text>
<text x="716" y="451" font-size="6.5" fill="#444" text-anchor="middle" dominant-baseline="central" font-style="normal" font-weight="normal" transform="rotate(22 716 451)">SR 100 PVC</text>
<text x="936" y="434" font-size="6.5" fill="#444" text-anchor="middle" dominant-baseline="central" font-style="normal" font-weight="normal" transform="rotate(-70 936 434)">SR 120 Kabuflex</text>
<text x="1024" y="548" font-size="6.5" fill="#444" text-anchor="middle" dominant-baseline="central" font-style="normal" font-weight="normal" transform="rotate(10 1024 548)">SR 120 Kabuflex</text>
<rect x="1194" y="869" width="77" height="33" rx="6" fill="#fff"/>
<text x="1229.5" y="883.5" font-size="14" fill="#8b0000" text-anchor="middle">5 m</text>
<rect x="1201" y="889" width="57" height="6" fill="#8b0000"/>
<rect x="1216" y="890" width="12" height="4" fill="#f08080"/><rect x="1243" y="890" width="14" height="4" fill="#f08080"/>
</svg>
 <!-- BOTTOM TOOLBAR -->
 <div id="btb" class="abs panel" style="left:338px;top:904px;width:934px;height:32px"></div>
<div class="abs" style="left:338px;top:904px;width:934px;height:1px;background:#9aa5b1"></div>
<div class="abs" style="left:340px;top:906px;width:11px;height:27px;background-image:radial-gradient(circle at 1.5px 1.5px,#8ea2b8 0.9px,transparent 1.2px),radial-gradient(circle at 4.5px 4.5px,#8ea2b8 0.9px,transparent 1.2px);background-size:6px 6px"></div>
<svg class="abs" style="left:355px;top:908px" width="26" height="24" viewBox="0 0 26 24">
<rect x="0.5" y="1.5" width="6" height="6" fill="#fff" stroke="#444"/><rect x="0.5" y="9.5" width="6" height="6" fill="#fff" stroke="#444"/><path d="M1.5 10.5l4 4M5.5 10.5l-4 4" stroke="#b00" stroke-width="1.6"/><rect x="0.5" y="17.5" width="6" height="6" fill="#fff" stroke="#444"/>
<path d="M9 4h3M14 4h11M9 12h3M14 12h3M19 12h6M9 20h3M14 20h3M19 20h6" stroke="#444" stroke-width="1.6"/></svg>
<svg class="abs" style="left:390px;top:906px" width="30" height="28" viewBox="0 0 30 28">
<path d="M5.5 22.5 L13 14.5" stroke="#8b0000" stroke-width="3.6" stroke-linecap="round"/>
<circle cx="18.6" cy="9.8" r="6.2" fill="#d8d8d8" stroke="#6e6e6e" stroke-width="2"/>
<path d="M16 7.5 q1.5 -1.5 3 -0.5" stroke="#fff" stroke-width="1" fill="none"/><path d="M14.8 9.8h7.6M18.6 6v7.6" stroke="#9a0000" stroke-width="2.4"/></svg>
<svg class="abs" style="left:417px;top:906px" width="30" height="28" viewBox="0 0 30 28">
<path d="M5.5 22.5 L13 14.5" stroke="#8b0000" stroke-width="3.6" stroke-linecap="round"/>
<circle cx="18.6" cy="9.8" r="6.2" fill="#d8d8d8" stroke="#6e6e6e" stroke-width="2"/>
<path d="M16 7.5 q1.5 -1.5 3 -0.5" stroke="#fff" stroke-width="1" fill="none"/><path d="M14.8 9.8h7.6" stroke="#9a0000" stroke-width="2.6"/></svg>
<svg class="abs" style="left:444px;top:906px" width="30" height="28" viewBox="0 0 30 28">
<path d="M5.5 22.5 L13 14.5" stroke="#8b0000" stroke-width="3.6" stroke-linecap="round"/>
<circle cx="18.6" cy="9.8" r="6.2" fill="#d8d8d8" stroke="#6e6e6e" stroke-width="2"/>
<path d="M16 7.5 q1.5 -1.5 3 -0.5" stroke="#fff" stroke-width="1" fill="none"/><rect x="8.5" y="1.5" width="19" height="17" fill="none" stroke="#a00" stroke-width="1" stroke-dasharray="2.2 1.5"/></svg>
<svg class="abs" style="left:470px;top:906px" width="30" height="28" viewBox="0 0 30 28">
<path d="M5.5 22.5 L13 14.5" stroke="#8b0000" stroke-width="3.6" stroke-linecap="round"/>
<circle cx="18.6" cy="9.8" r="6.2" fill="#d8d8d8" stroke="#6e6e6e" stroke-width="2"/>
<path d="M16 7.5 q1.5 -1.5 3 -0.5" stroke="#fff" stroke-width="1" fill="none"/><path d="M18.6 0l-2.5 2.6h5zM18.6 21l-2.5-2.6h5zM9 9.8l2.6-2.5v5zM28.5 9.8l-2.6-2.5v5z" fill="#9a0000"/></svg>
<svg class="abs" style="left:497px;top:906px" width="30" height="28" viewBox="0 0 30 28">
<path d="M5.5 22.5 L13 14.5" stroke="#8b0000" stroke-width="3.6" stroke-linecap="round"/>
<circle cx="18.6" cy="9.8" r="6.2" fill="#d8d8d8" stroke="#6e6e6e" stroke-width="2"/>
<path d="M16 7.5 q1.5 -1.5 3 -0.5" stroke="#fff" stroke-width="1" fill="none"/><path d="M16 12.5 L26 3" stroke="#9a0000" stroke-width="2.2"/><path d="M28 0.5l-8.5 2 6.5 6.5z" fill="#9a0000"/></svg>
<svg class="abs" style="left:520px;top:903px" width="200" height="34" viewBox="520 903 200 34">
<rect x="528.5" y="909.5" width="23" height="19" fill="#d6d6d6" stroke="#777" stroke-width="1.2"/><rect x="528" y="909" width="24" height="2.2" fill="#8b0000"/>
<path d="M529 930 L536 922.5" stroke="#8b0000" stroke-width="3.4" stroke-linecap="round"/>
<circle cx="541.5" cy="917.5" r="5.6" fill="#cfcfcf" stroke="#6e6e6e" stroke-width="1.8"/><rect x="539" y="915" width="5" height="5" fill="none" stroke="#555" stroke-width="0.9"/><path d="M539 915.5h5" stroke="#8b0000" stroke-width="1"/>
<path d="M560.5 926 A7.5 7.5 0 1 1 574 923" fill="none" stroke="#8b0000" stroke-width="2.4"/><path d="M557 924 L565 925.5 L559.5 929.5z" fill="#8b0000"/>
<path d="M599 926 A7.5 7.5 0 1 0 585.5 923" fill="none" stroke="#8b0000" stroke-width="2.4"/><path d="M602.5 924 L594.5 925.5 L600 929.5z" fill="#8b0000"/>
<path d="M625 911 L637 911.5 L633 920 L621.5 919.5z" fill="#fff" stroke="#444" stroke-width="0.9"/><path d="M626.5 913.5h7.5M625.5 915.5h7.5M624.5 917.5h7.5" stroke="#c01010" stroke-width="0.9"/>
<path d="M621 919.5 L638 919.5 L640 923 L640 927.5 L621 927.5 L620 924z" fill="#e8e8e8" stroke="#333" stroke-width="0.9"/>
<rect x="621" y="925.5" width="19" height="3" fill="#444"/><circle cx="624" cy="923" r="0.8" fill="#c00"/><circle cx="626.5" cy="923" r="0.8" fill="#1a1"/><path d="M629 923h6" stroke="#999" stroke-width="0.8"/>
<path d="M637 912 L640 915 L640 921" fill="none" stroke="#555" stroke-width="1"/>
</svg>
<svg class="abs" style="left:655px;top:907px" width="22" height="27" viewBox="0 0 22 27">
<path d="M7 25 L3 16 Q2 13 5 14 L7 17 L7 4 Q7 1.5 9 2 Q10.5 2 10.5 4 L10.5 11 Q11 9 13 10 L13 12 Q14 10.5 16 11.5 L16 13 Q17 11.5 19 13 L19 20 L16 25z" fill="#fff" stroke="#333" stroke-width="1.1"/></svg>
<svg class="abs" style="left:691px;top:908px" width="25" height="22" viewBox="0 0 25 22">
<path d="M1 4h8l2 2h13v15h-23z" fill="#fff4a0" stroke="#c9b24a" stroke-width="1"/></svg>
 <!-- DIALOG -->
 <div id="winb"></div>
 <div id="dlg">
<div class="abs" style="left:0;top:0;width:590px;height:30px;background:linear-gradient(#a2bbd9,#bcd2ea)"></div>
<svg class="abs" style="left:10px;top:13px" width="13" height="9" viewBox="0 0 13 9"><path d="M0.5 3.5 Q6.5 -1.5 12.5 3.5 L9 4 L6.5 8.5 L4 4z" fill="#3a9a86"/><path d="M6.5 1 L6.5 8" stroke="#1f6a5a" stroke-width="0.8"/></svg>
<div class="abs" style="left:29px;top:11px;font-size:11.73px;color:#000;white-space:nowrap">Gaja®Matrix Sachdateneingabe - Sachdaten editieren - Leuchte: 1000 ( Stahlbetonm...</div>
<div class="wbtn" style="left:484px;top:9px;width:30px;height:17px"><div class="abs" style="left:10px;top:8px;width:11px;height:5px;background:#fff;border:1px solid #3b4a5c;border-radius:1px"></div></div>
<div class="wbtn" style="left:517px;top:9px;width:30px;height:17px"><div class="abs" style="left:10px;top:3px;width:11px;height:9px;background:#fff;border:1px solid #3b4a5c"><div class="abs" style="left:2px;top:2px;width:5px;height:3px;border:1px solid #3b4a5c;background:#9fb7d3"></div></div></div>
<div class="wbtn close" style="left:550px;top:9px;width:31px;height:17px"><svg class="abs" style="left:9px;top:2px" width="13" height="12" viewBox="0 0 13 12"><path d="M2.8 2.8L10.2 9.2M10.2 2.8L2.8 9.2" stroke="#4a2a2a" stroke-width="3.9" stroke-linecap="round"/><path d="M2.8 2.8L10.2 9.2M10.2 2.8L2.8 9.2" stroke="#fff" stroke-width="2.1" stroke-linecap="round"/></svg></div>
<div class="abs" style="left:7px;top:29px;width:575px;height:646px;background:#ececec"></div>
<div class="abs" style="left:7px;top:29px;width:132px;height:31px;background:linear-gradient(#fafafa,#e0e0e0)"></div>
<svg class="abs" style="left:7px;top:29px" width="132" height="31" viewBox="84 199 132 31">
<path d="M89.5 203.5h12v18" fill="#fff" stroke="#111" stroke-width="1"/><rect x="90" y="204" width="11" height="17" fill="#fff"/><path d="M89.5 203.5h12v18" fill="none" stroke="#111" stroke-width="1"/>
<path d="M86 221.5h23" stroke="#111" stroke-width="1"/>
<path d="M89.8 205 L95.3 208 L95.3 226.8 L89.8 223.8z" fill="#8e0e0e" stroke="#1a0000" stroke-width="0.8"/>
<path d="M102.9 212.6 L107.5 207.9 L107.5 210.8 L111 210.8 L111 214.3 L107.5 214.3 L107.5 217.3z" fill="#8b0000"/>
<path d="M127.5 203.5h17l1.5 1.5v18.5h-17.5l-1-1z" fill="#6e6e6e" stroke="#333" stroke-width="0.8"/>
<rect x="130" y="204.5" width="13" height="8.5" fill="#f4f4f4"/><rect x="131" y="215" width="11" height="8" fill="#f0f0f0"/><rect x="132.5" y="217" width="3.5" height="6" fill="#6e6e6e"/>
<path d="M123.4 207.3 L130.4 200.3 L130.4 204.8 L141 204.8 L139.5 207.8 L141 210.5 L130.4 210.5 L130.4 214.9z" fill="#8b0000"/>
<path d="M154.5 205.5h17.5l1 1v17h-17.5l-1-1z" fill="#6e6e6e" stroke="#333" stroke-width="0.8"/>
<rect x="157" y="206.5" width="13" height="8.5" fill="#f4f4f4"/><path d="M158.5 208.7h10M158.5 210.7h10M158.5 212.7h10" stroke="#c01010" stroke-width="0.9"/>
<rect x="158" y="217" width="11" height="7" fill="#f0f0f0"/><rect x="159.5" y="218.5" width="3.5" height="5.5" fill="#6e6e6e"/>
<path d="M189.5 205.5 Q190 203.5 192 203.5 L197 203.5 Q199 204 199.5 206 L209.5 206.5 L209.5 222.5 L189.5 222.5z" fill="#fff89a" stroke="#d8b070" stroke-width="0.8"/>
<path d="M189.5 207.5 h20" stroke="#e8e0b0" stroke-width="0.8"/><path d="M190 222.5h20v-15" fill="none" stroke="#b8b040" stroke-width="1"/>
</svg>

<div class="abs" style="left:154px;top:52px;width:419px;height:6px;background:#c9def2;border:1px solid #7b8ea8;border-top:1px solid #6f8fc4"></div>
<div class="abs" style="left:157px;top:36px;width:80px;height:17px;background:#c4c4c4;border:1px solid #8c8c8c;border-bottom:none;clip-path:polygon(4px 0,100% 0,100% 100%,0 100%,0 4px)"></div>
<div class="abs" style="left:165px;top:39px;font-size:10.2px;font-weight:bold;color:#222">Grunddaten</div>
<div class="abs" style="left:236px;top:35px;width:107px;height:19px;background:#c9def2;border:1px solid #6f8fc4;border-bottom:none;clip-path:polygon(5px 0,100% 0,100% 100%,0 100%,0 5px)"></div>
<div class="abs" style="left:244px;top:39px;font-size:10.2px;font-weight:bold;color:#222">weitere Angaben</div>
<div class="abs" style="left:7px;top:60px;width:576px;height:593px;border:1px solid #a7b0b8;border-right:1px solid #9aa3ab;box-shadow:inset -1px -1px 0 #fff"></div>

<div class="grp" style="left:22px;top:86px;width:546px;height:221px"><div class="gt">weitere Angaben</div></div>
<div class="lbl" style="left:43px;top:111px">Masttyp</div>
<div class="lbl" style="left:43px;top:151px">Farbe</div>
<div class="lbl" style="left:43px;top:191px">Ausleger</div>
<div class="lbl" style="left:43px;top:231px">Sicherung</div>
<div class="lbl" style="left:43px;top:271px">LP - Höhe</div>
<div class="combo" style="left:176px;top:111px">{kein Eintrag}<div class="arr"></div></div>
<div class="pen" style="left:414px;top:111px"><svg class="abs" style="left:0;top:0" width="24" height="24" viewBox="0 0 24 24"><path d="M5.2 18.7 L6.9 14 L17.4 4.3 Q19.5 3.5 20.6 5.5 Q21 6.8 20.5 7.7 L10.1 17.4z" fill="#d2d2d2" stroke="#5a5a5a" stroke-width="0.9" stroke-linejoin="round"/><path d="M5.2 18.7 L6 16.4 L7.6 17.8z" fill="#222"/><path d="M8.5 15.6 L18.8 6" stroke="#f0f0f0" stroke-width="0.8"/></svg></div>
<div class="neu" style="left:477px;top:112px">Neu</div><div class="combo" style="left:176px;top:151px">{kein Eintrag}<div class="arr"></div></div>
<div class="pen" style="left:414px;top:151px"><svg class="abs" style="left:0;top:0" width="24" height="24" viewBox="0 0 24 24"><path d="M5.2 18.7 L6.9 14 L17.4 4.3 Q19.5 3.5 20.6 5.5 Q21 6.8 20.5 7.7 L10.1 17.4z" fill="#d2d2d2" stroke="#5a5a5a" stroke-width="0.9" stroke-linejoin="round"/><path d="M5.2 18.7 L6 16.4 L7.6 17.8z" fill="#222"/><path d="M8.5 15.6 L18.8 6" stroke="#f0f0f0" stroke-width="0.8"/></svg></div>
<div class="neu" style="left:477px;top:152px">Neu</div><div class="combo" style="left:176px;top:191px">1fach "Gotha"<div class="arr"></div></div>
<div class="pen" style="left:414px;top:191px"><svg class="abs" style="left:0;top:0" width="24" height="24" viewBox="0 0 24 24"><path d="M5.2 18.7 L6.9 14 L17.4 4.3 Q19.5 3.5 20.6 5.5 Q21 6.8 20.5 7.7 L10.1 17.4z" fill="#d2d2d2" stroke="#5a5a5a" stroke-width="0.9" stroke-linejoin="round"/><path d="M5.2 18.7 L6 16.4 L7.6 17.8z" fill="#222"/><path d="M8.5 15.6 L18.8 6" stroke="#f0f0f0" stroke-width="0.8"/></svg></div>
<div class="neu" style="left:477px;top:192px">Neu</div><div class="combo" style="left:176px;top:231px">{kein Eintrag}<div class="arr"></div></div>
<div class="pen" style="left:414px;top:231px"><svg class="abs" style="left:0;top:0" width="24" height="24" viewBox="0 0 24 24"><path d="M5.2 18.7 L6.9 14 L17.4 4.3 Q19.5 3.5 20.6 5.5 Q21 6.8 20.5 7.7 L10.1 17.4z" fill="#d2d2d2" stroke="#5a5a5a" stroke-width="0.9" stroke-linejoin="round"/><path d="M5.2 18.7 L6 16.4 L7.6 17.8z" fill="#222"/><path d="M8.5 15.6 L18.8 6" stroke="#f0f0f0" stroke-width="0.8"/></svg></div>
<div class="neu" style="left:477px;top:232px">Neu</div>
<div class="inp" style="left:176px;top:271px;width:53px;height:18px">4,50</div>
<div class="lbl" style="left:237px;top:276px">m</div>
<div class="lbl" style="left:302px;top:276px">Oberfläche</div>
<div class="inp" style="left:380px;top:271px;width:59px;height:18px"></div>
<div class="lbl" style="left:445px;top:276px">m²</div>

<div class="grp" style="left:22px;top:336px;width:547px;height:301px"><div class="gt">Sonstiges</div></div>
<div class="lbl" style="left:45px;top:363px">Gebaut von</div>
<div class="inp" style="left:44px;top:378px;width:365px;height:18px">Musterbau GmbH</div>
<div class="lbl" style="left:442px;top:363px">Baujahr</div>
<div class="inp" style="left:440px;top:378px;width:95px;height:18px">2006</div>
<div class="lbl" style="left:45px;top:413px">Fremdanschlüsse/Sonderausstattung</div>
<div class="inp" style="left:44px;top:428px;width:491px;height:18px"></div>
<div class="lbl" style="left:45px;top:463px">Bemerkung</div>
<div class="inp" style="left:44px;top:478px;width:491px;height:142px"></div>

<div class="abs" style="left:7px;top:654px;width:576px;height:21px;border:1px solid #8a9aac;border-right-color:#c5d0db;border-bottom-color:#8a9aac;background:#ececec"></div>
</div>
<div id="dlgb"></div>
</div>
</body></html>
